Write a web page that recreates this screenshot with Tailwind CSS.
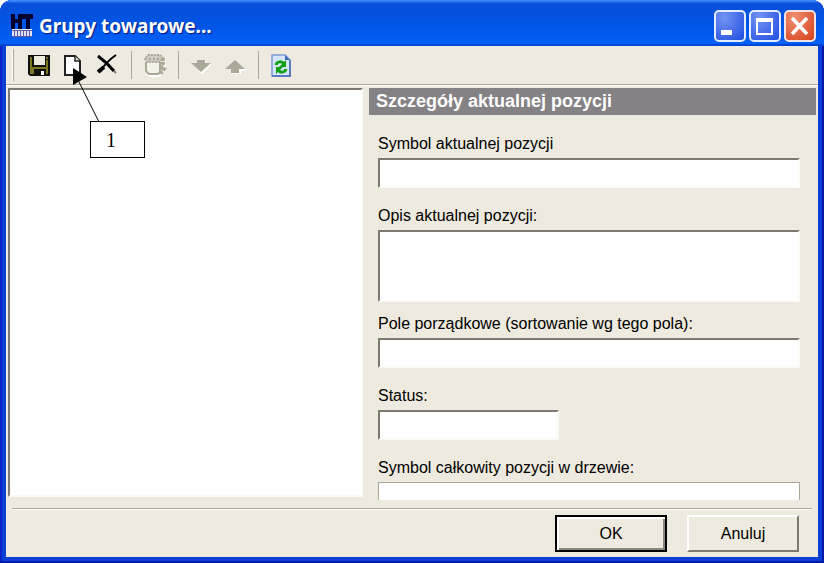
<!DOCTYPE html>
<html lang="pl">
<head>
    <meta charset="UTF-8">
    <meta name="viewport" content="width=device-width, initial-scale=1.0">
    <title>Grupy towarowe...</title>
    <script src="https://cdn.jsdelivr.net/npm/@tailwindcss/browser@4"></script>
</head>
<body class="bg-white">
<div class="relative flex h-screen flex-col overflow-hidden rounded-t-xl bg-[#0a3fd6] px-[6px] pb-[6px] font-['Liberation_Sans',sans-serif] text-base text-black shadow-[inset_-2px_-2px_0_#0019a8,inset_2px_0_0_#0a22c8]">

    <!-- Title bar -->
    <header class="-mx-[6px] flex h-[46px] shrink-0 items-center justify-between bg-linear-to-b from-[#0a4fd8] via-[#0054e3] to-[#0262fb] pt-[5px] pr-2 pl-[11px] shadow-[inset_0_3px_2px_-1px_#3d8cf8,inset_0_-2px_1px_#0046d5]">
        <div class="flex items-center gap-[6px]">
            <svg class="h-6 w-[22px]" viewBox="0 0 22 24" aria-hidden="true">
                <path fill="#000030" d="M0 0h4v5h3V0h4v15H7V9H4v6H0zM11 0h11v5h-3v10h-4V5h-4z"/>
                <path fill="#e4e4f4" d="M1 15h20v8H1z"/>
                <path stroke="#5a5aa8" stroke-width="1" d="M1 16.500h20M1 22.500h20M3.500 17v6M6.500 17v6M9.500 17v6M12.500 17v6M15.500 17v6M18.500 17v6"/>
            </svg>
            <h1 class="font-['Noto_Sans',sans-serif] text-[19px] leading-6 font-bold text-white [text-shadow:1px_1px_1px_#0a1883]">Grupy towarowe...</h1>
        </div>
        <div class="flex gap-[3px]">
            <button type="button" aria-label="Minimalizuj"
                    class="h-8 w-8 rounded-[5px] border-2 border-[#e4ecff] bg-radial-[at_30%_20%] from-[#7393f4] to-[#1f4ce0]">
                <svg class="h-7 w-7" viewBox="0 0 28 28"><path fill="#fff" d="M5 18h11v5H5z"/></svg>
            </button>
            <button type="button" aria-label="Maksymalizuj"
                    class="h-8 w-8 rounded-[5px] border-2 border-[#e4ecff] bg-radial-[at_30%_20%] from-[#7393f4] to-[#1f4ce0]">
                <svg class="h-7 w-7" viewBox="0 0 28 28"><path fill="#fff" fill-rule="evenodd" d="M5 6h17v17H5zM7 10v11h13V10z"/></svg>
            </button>
            <button type="button" aria-label="Zamknij"
                    class="h-8 w-8 rounded-[5px] border-2 border-[#f4e4e4] bg-radial-[at_30%_20%] from-[#f08f72] to-[#d6401a]">
                <svg class="h-7 w-7" viewBox="0 0 28 28"><path stroke="#fff" stroke-width="3.500" d="M6 6l15 16M21 6L6 22"/></svg>
            </button>
        </div>
    </header>

    <!-- Toolbar -->
    <div role="toolbar" class="flex h-[39px] shrink-0 items-center border-b border-[#aca899] bg-[#eeeadf] pl-[6px]">
        <div class="mr-2 h-8 w-[2px] border-r border-[#aca899] bg-white"></div>
        <button type="button" aria-label="Zapisz" class="flex w-[34px] justify-center">
            <svg class="h-6 w-6" viewBox="0 0 24 24">
                <path fill="#111" d="M1 2h22v21H3l-2-2z"/>
                <path fill="#7d7820" d="M3 4h2v17H3zM19 7h2v14h-2zM5 14h14v2H5zM5 16h2v5H5zM19 4h2v2h-2z"/>
                <path fill="#eeeadf" d="M7 3h11v9H7z"/>
                <path fill="#fff" d="M14 18h3v4h-3z"/>
            </svg>
        </button>
        <button type="button" aria-label="Nowy" class="flex w-[34px] justify-center">
            <svg class="h-6 w-6" viewBox="0 0 24 24">
                <path fill="#fff" stroke="#222" stroke-width="2" d="M4 3h10l5 5v14H4z"/>
                <path fill="#eeeadf" stroke="#222" stroke-width="1.500" d="M14 3v5h5"/>
            </svg>
        </button>
        <button type="button" aria-label="Usuń" class="flex w-[34px] justify-center">
            <svg class="h-6 w-6" viewBox="0 0 24 24" stroke="#000" fill="none">
                <path stroke-width="3" d="M3 3c4 3 11 9 16 15"/>
                <path stroke-width="2" d="M21 2C15 6 9 12 5 19"/>
                <path stroke-width="4" d="M3 19l6-5"/>
                <path stroke-width="2" stroke="#777" d="M19 18l2 2"/>
            </svg>
        </button>
        <div class="flex w-[14px] justify-center"><span class="h-7 w-px bg-[#aca899]"></span></div>
        <button type="button" aria-label="Historia" disabled class="flex w-[34px] justify-center">
            <svg class="h-6 w-6" viewBox="0 0 24 24" fill="none">
                <path stroke="#fff" stroke-width="2" d="M4 20l3 3h9l6-5V6"/>
                <path fill="#f4f1e9" stroke="#aca899" stroke-width="2" d="M3 9v9l3 3h9l2-2V9"/>
                <path fill="#d0ccc0" stroke="#aca899" stroke-width="2" stroke-dasharray="2 1" d="M5 2h12l3 3-3 4H5L2 6z"/>
                <path stroke="#aca899" stroke-width="2" d="M6 6h2M10 6h2M14 6h2"/>
                <path stroke="#aca899" stroke-width="4" stroke-dasharray="3 1" d="M20 5v5l-2 4 3 2-4 5"/>
            </svg>
        </button>
        <div class="flex w-[12px] justify-center"><span class="h-7 w-px bg-[#aca899]"></span></div>
        <button type="button" aria-label="W dół" disabled class="flex w-[34px] justify-center">
            <svg class="h-6 w-6" viewBox="0 0 24 24">
                <path fill="#fff" d="M9 8h8v3h6L13 21l-3-3z"/>
                <path fill="#aca899" d="M8 7h8v3h6l-10 9L2 10h6z"/>
            </svg>
        </button>
        <button type="button" aria-label="W górę" disabled class="flex w-[34px] justify-center">
            <svg class="h-6 w-6" viewBox="0 0 24 24">
                <path fill="#fff" d="M13 9l10 8v1h-5v3H9v-3z"/>
                <path fill="#aca899" d="M12 7l10 9h-6v4H8v-4H2z"/>
            </svg>
        </button>
        <div class="flex w-[12px] justify-center"><span class="h-7 w-px bg-[#aca899]"></span></div>
        <button type="button" aria-label="Odśwież" class="flex w-[34px] justify-center">
            <svg class="h-6 w-6" viewBox="0 0 24 24">
                <path fill="#d5e6fc" stroke="#7d9cd4" stroke-width="1.500" d="M3 2h13l5 5v16H3z"/>
                <path stroke="#4a6ab8" stroke-width="1.500" d="M21 7v16H3"  fill="none"/>
                <path fill="#4668b8" d="M16 2l5 5h-5z"/>
                <path fill="none" stroke="#12a012" stroke-width="3" d="M7 12c1-4 6-4 8-1M17 16c-1 4-6 4-8 1"/>
                <path fill="#12a012" d="M17 7v7h-7zM7 21v-7h7z"/>
            </svg>
        </button>
    </div>

    <main class="flex min-h-0 flex-1 flex-col border-t border-white bg-[#eeeadf]">
        <div class="flex min-h-0 flex-1 gap-[6px] pt-[2px] pr-[2px] pl-[2px]">
            <!-- Group tree -->
            <div role="tree" aria-label="Grupy towarowe"
                 class="mb-[3px] w-[355px] shrink-0 border-2 border-t-[#7d7970] border-r-[#fbfaf5] border-b-[#fbfaf5] border-l-[#7d7970] bg-white"></div>

            <!-- Details of the current item -->
            <section class="flex min-w-0 flex-1 flex-col overflow-hidden">
                <h2 class="h-[27px] shrink-0 bg-[#848284] pl-[7px] text-lg leading-[27px] font-bold text-white">Szczegóły aktualnej pozycji</h2>
                <form class="flex flex-col pt-[19px] pr-4 pl-[9px]">
                    <label for="symbol" class="mb-1 leading-5">Symbol aktualnej pozycji</label>
                    <input id="symbol" type="text"
                           class="mb-[18px] h-[30px] w-full border-2 border-t-[#7d7970] border-r-[#fbfaf5] border-b-[#fbfaf5] border-l-[#7d7970] bg-white px-1 outline-none">
                    <label for="opis" class="mb-1 leading-5">Opis aktualnej pozycji:</label>
                    <textarea id="opis"
                              class="mb-3 h-[72px] w-full resize-none border-2 border-t-[#7d7970] border-r-[#fbfaf5] border-b-[#fbfaf5] border-l-[#7d7970] bg-white px-1 outline-none"></textarea>
                    <label for="pole" class="mb-1 leading-5">Pole porządkowe (sortowanie wg tego pola):</label>
                    <input id="pole" type="text"
                           class="mb-[18px] h-[30px] w-full border-2 border-t-[#7d7970] border-r-[#fbfaf5] border-b-[#fbfaf5] border-l-[#7d7970] bg-white px-1 outline-none">
                    <label for="status" class="mb-1 leading-5">Status:</label>
                    <input id="status" type="text"
                           class="mb-[18px] h-[30px] w-[181px] border-2 border-t-[#7d7970] border-r-[#fbfaf5] border-b-[#fbfaf5] border-l-[#7d7970] bg-white px-1 outline-none">
                    <label for="calkowity" class="mb-1 leading-5">Symbol całkowity pozycji w drzewie:</label>
                    <input id="calkowity" type="text" readonly
                           class="h-[30px] w-full border border-[#aca899] bg-white px-1 outline-none">
                </form>
            </section>
        </div>

        <!-- Buttons -->
        <footer class="mx-[6px] mt-2 flex shrink-0 justify-end gap-5 border-t border-[#aca899] pt-[6px] pr-[13px] pb-[5px] shadow-[inset_0_1px_0_#fff]">
            <button type="submit"
                    class="h-[37px] w-[112px] border-2 border-black bg-[#eeeadf] shadow-[inset_2px_2px_0_#fff,inset_-2px_-2px_0_#8a867c]">OK</button>
            <button type="button"
                    class="h-[37px] w-[112px] border-2 border-t-white border-r-[#7d7970] border-b-[#7d7970] border-l-white bg-[#eeeadf]">Anuluj</button>
        </footer>
    </main>

    <!-- Callout over the toolbar -->
    <svg class="pointer-events-none absolute top-[68px] left-[72px] h-[54px] w-8" viewBox="0 0 32 54" aria-hidden="true">
        <path stroke="#000" d="M6 12l21 42"/>
        <path d="M1 0l14 9-14 8z"/>
    </svg>
    <div class="absolute top-[121px] left-[90px] h-[37px] w-[55px] border border-black bg-white pl-[15px] font-['Liberation_Serif',serif] text-xl leading-[37px]">1</div>
</div>
</body>
</html>
